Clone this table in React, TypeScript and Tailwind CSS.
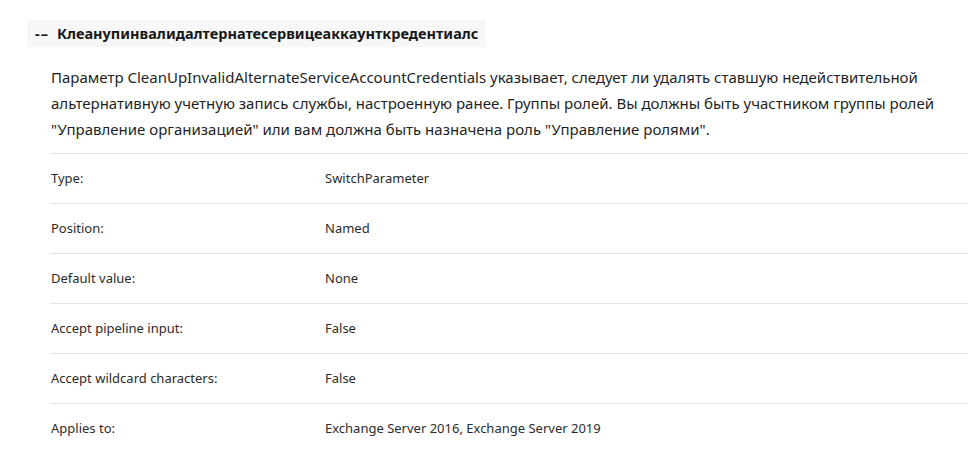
const rows = [
  ["Type:", "SwitchParameter"],
  ["Position:", "Named"],
  ["Default value:", "None"],
  ["Accept pipeline input:", "False"],
  ["Accept wildcard characters:", "False"],
  ["Applies to:", "Exchange Server 2016, Exchange Server 2019"],
];

export default function App() {
  return (
    <div className="min-h-[473px] bg-white pt-[20px] font-['Noto_Sans',sans-serif] text-[#171717]">
      <div className="ml-[27px] flex h-[27px] w-[459px] items-center bg-[#f7f7f7] px-[8px] text-[14.5px] font-bold">
        <span className="mr-[8px] tracking-[1px]">-–</span>
        <span>Клеанупинвалидалтернатесервицеаккаунткредентиалс</span>
      </div>

      <p className="ml-[51px] mt-[17px] text-[15px] leading-[26px] text-[#1f1f1f]">
        Параметр CleanUpInvalidAlternateServiceAccountCredentials указывает, следует ли удалять ставшую недействительной
        <br />
        альтернативную учетную запись службы, настроенную ранее. Группы ролей. Вы должны быть участником группы ролей
        <br />
        "Управление организацией" или вам должна быть назначена роль "Управление ролями".
      </p>

      <div className="ml-[50px] mr-[3px] mt-[11px] border-t border-[#e3e3e3]">
        {rows.map(([label, value], i) => (
          <div
            key={label}
            className={`flex h-[50px] items-center text-[13px] text-[#2b2b2b] ${i < rows.length - 1 ? "border-b border-[#e3e3e3]" : ""}`}
          >
            <div className="w-[275px] pl-[1px]">{label}</div>
            <div>{value}</div>
          </div>
        ))}
      </div>
    </div>
  );
}
